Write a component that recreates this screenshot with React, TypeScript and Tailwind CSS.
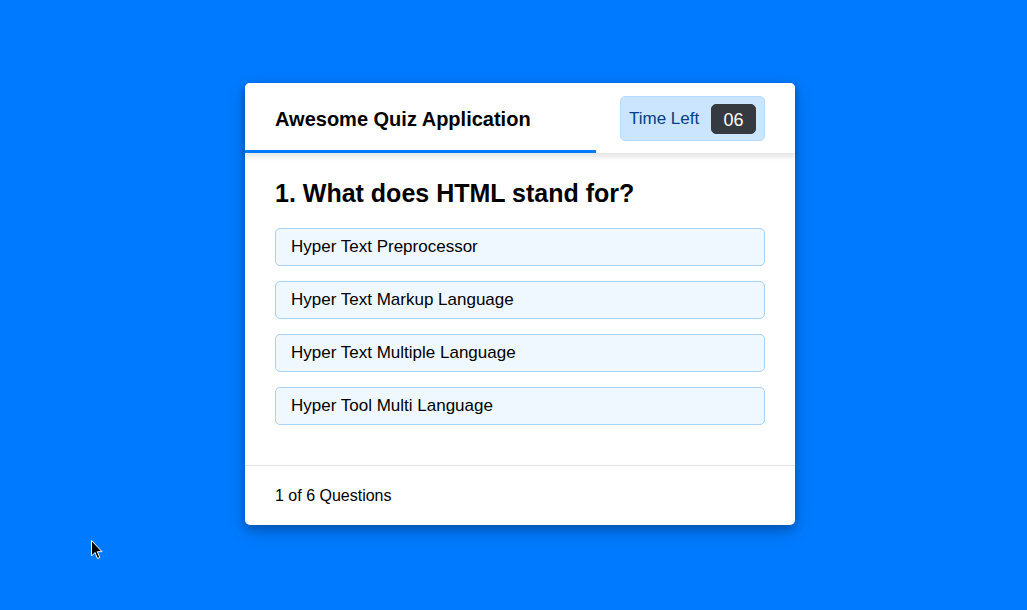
import React from "react";

const options = [
  "Hyper Text Preprocessor",
  "Hyper Text Markup Language",
  "Hyper Text Multiple Language",
  "Hyper Tool Multi Language",
];

export default function App() {
  return (
    <div
      className="relative w-[1027px] h-[610px] bg-[#007bff] overflow-hidden pt-[83px] pl-[245px]"
      style={{ fontFamily: '"Liberation Sans", Arial, sans-serif' }}
    >
      <div className="w-[550px] bg-white rounded-[5px] shadow-[0_4px_8px_0_rgba(0,0,0,0.2),0_6px_20px_0_rgba(0,0,0,0.19)]">
        <header className="relative z-10 h-[70px] pt-[1px] px-[30px] flex items-center justify-between rounded-t-[5px] bg-white shadow-[0_3px_5px_1px_rgba(0,0,0,0.1)]">
          <div className="text-[20px] font-bold text-black">Awesome Quiz Application</div>
          <div className="w-[145px] h-[45px] px-[8px] flex items-center justify-between bg-[#cce5ff] border border-[#b8daff] rounded-[5px] text-[#004085]">
            <span className="text-[17px]">Time Left</span>
            <span className="w-[45px] h-[30px] leading-[30px] text-center text-[18px] text-white bg-[#343a40] border border-[#343a40] rounded-[5px]">
              06
            </span>
          </div>
          <div className="absolute left-0 bottom-0 h-[3px] w-[351px] bg-[#007bff]" />
        </header>
        <section className="pt-[25px] pb-[20px] px-[30px]">
          <div className="text-[25px] leading-[30px] font-bold text-black">1. What does HTML stand for?</div>
          <div className="py-[20px] flex flex-col gap-[15px]">
            {options.map((o) => (
              <div
                key={o}
                className="h-[38px] flex items-center px-[15px] bg-[#f0f8ff] border border-[#a9d3f5] rounded-[5px] text-[17px] text-black"
              >
                {o}
              </div>
            ))}
          </div>
        </section>
        <footer className="h-[60px] px-[30px] flex items-center border-t border-[#e0e0e0] text-[16px] text-black">
          1 of 6 Questions
        </footer>
      </div>
      <svg
        className="absolute left-[91px] top-[540px]"
        width="13"
        height="20"
        viewBox="0 0 13 20"
      >
        <path
          d="M0.5 0.5 L0.5 16 L4 12.5 L6.5 18.5 L8.8 17.5 L6.3 11.7 L11 11.7 Z"
          fill="#000"
          stroke="#fff"
          strokeWidth="1"
        />
      </svg>
    </div>
  );
}
